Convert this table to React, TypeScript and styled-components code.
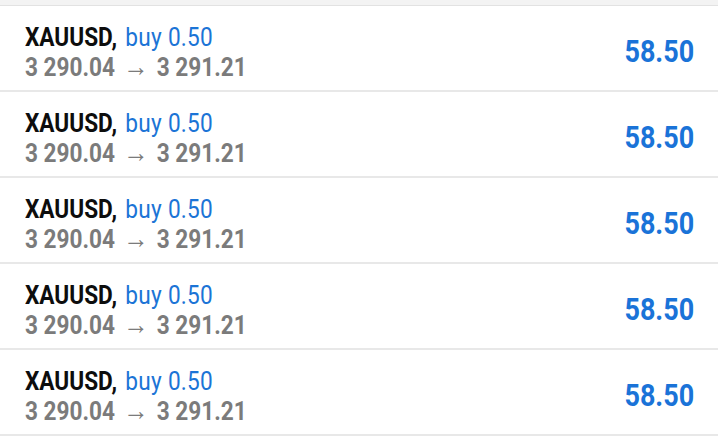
import styled, { createGlobalStyle } from 'styled-components'

const GlobalStyle = createGlobalStyle`
  html, body {
    margin: 0;
    padding: 0;
    background: #ffffff;
  }
  body {
    font-family: Roboto, "Liberation Sans", sans-serif;
  }
`

type Deal = {
  symbol: string
  side: string
  volume: string
  open: string
  close: string
  profit: string
}

const deals: Deal[] = Array.from({ length: 5 }, () => ({
  symbol: 'XAUUSD',
  side: 'buy',
  volume: '0.50',
  open: '3 290.04',
  close: '3 291.21',
  profit: '58.50',
}))

function App() {
  return (
    <>
      <GlobalStyle />
      <Page>
        <TopBand />
        <List>
          {deals.map((d, i) => (
            <Row key={i}>
              <Info>
                <Title>
                  <Symbol>{d.symbol},</Symbol> <Side>{d.side} {d.volume}</Side>
                </Title>
                <Prices>
                  {d.open} <Arrow>→</Arrow> {d.close}
                </Prices>
              </Info>
              <Profit>{d.profit}</Profit>
            </Row>
          ))}
        </List>
      </Page>
    </>
  )
}

const Page = styled.div`
  width: 718px;
  height: 438px;
  overflow: hidden;
  background: #ffffff;
`

const TopBand = styled.div`
  height: 5px;
  background: #f3f3f3;
  border-bottom: 1px solid #e2e2e2;
`

const List = styled.div`
  display: flex;
  flex-direction: column;
`

const Row = styled.div`
  box-sizing: border-box;
  display: flex;
  align-items: center;
  justify-content: space-between;
  height: 86px;
  padding: 7px 24px 0 25px;
  border-bottom: 2px solid #e8e8e8;
`

// the app uses a condensed face; Roboto is squeezed to match
const Info = styled.div`
  display: flex;
  flex-direction: column;
  transform: scaleX(0.87);
  transform-origin: left center;
`

const Title = styled.div`
  font-size: 26px;
  line-height: 30px;
  white-space: pre;
`

const Symbol = styled.span`
  color: #0d0d0d;
  font-weight: 700;
`

const Side = styled.span`
  color: #1b74d6;
  font-weight: 400;
  margin-left: 3px;
  letter-spacing: 0.3px;
`

const Prices = styled.div`
  font-size: 26px;
  line-height: 30px;
  font-weight: 700;
  color: #7b7b7b;
  white-space: pre;
`

const Arrow = styled.span`
  font-size: 29px;
  line-height: 1;
  font-weight: 400;
  padding: 0 3px;
`

const Profit = styled.div`
  font-size: 31px;
  font-weight: 700;
  color: #1a73d8;
  transform: scaleX(0.87);
  transform-origin: right center;
`

export default App
